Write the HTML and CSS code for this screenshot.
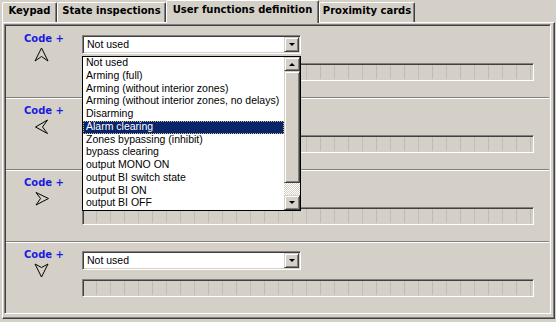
FILE: index.html
```html
<!DOCTYPE html>
<html>
<head>
<meta charset="utf-8">
<title>User functions definition</title>
<link rel="stylesheet" href="styles.css">
</head>
<body>
<div class="tabs">
  <div class="tab t1">Keypad</div>
  <div class="tab t2">State inspections</div>
  <div class="tab t3 active">User functions definition</div>
  <div class="tab t4">Proximity cards</div>
</div>
<div class="sheet">
  <div class="inner">
    <section class="row first">
      <div class="left">
        <span class="code">Code +</span>
        <svg class="arrow" viewBox="0 0 16 15" width="16" height="15"><polygon points="7.5,1 14,14 7.5,9.5 1,14"/></svg>
      </div>
      <div class="controls">
        <div class="combo-wrap">
          <div class="combo"><span class="val">Not used</span><span class="btn"><i class="tri-down"></i></span></div>
          <div class="list">
            <div class="items">
              <div class="item">Not used</div>
              <div class="item">Arming (full)</div>
              <div class="item">Arming (without interior zones)</div>
              <div class="item">Arming (without interior zones, no delays)</div>
              <div class="item">Disarming</div>
              <div class="item sel">Alarm clearing</div>
              <div class="item">Zones bypassing (inhibit)</div>
              <div class="item">bypass clearing</div>
              <div class="item">output MONO ON</div>
              <div class="item">output BI switch state</div>
              <div class="item">output BI ON</div>
              <div class="item">output BI OFF</div>
            </div>
            <div class="scroll">
              <div class="sbtn up"><i class="tri-up"></i></div>
              <div class="thumb"></div>
              <div class="track"></div>
              <div class="sbtn down"><i class="tri-down"></i></div>
            </div>
          </div>
        </div>
        <div class="bar"></div>
      </div>
    </section>
    <section class="row">
      <div class="left">
        <span class="code">Code +</span>
        <svg class="arrow" viewBox="0 0 16 15" width="16" height="15"><polygon points="13.5,1 1.5,8 13.5,14.5 8.5,8"/></svg>
      </div>
      <div class="controls">
        <div class="combo-wrap">
          <div class="combo"><span class="val"></span><span class="btn"><i class="tri-down"></i></span></div>
        </div>
        <div class="bar"></div>
      </div>
    </section>
    <section class="row">
      <div class="left">
        <span class="code">Code +</span>
        <svg class="arrow" viewBox="0 0 16 15" width="16" height="15"><polygon points="2,1.5 14.5,7.5 2,14 6.5,7.5"/></svg>
      </div>
      <div class="controls">
        <div class="combo-wrap">
          <div class="combo"><span class="val"></span><span class="btn"><i class="tri-down"></i></span></div>
        </div>
        <div class="bar"></div>
      </div>
    </section>
    <section class="row last">
      <div class="left">
        <span class="code">Code +</span>
        <svg class="arrow" viewBox="0 0 16 15" width="16" height="15"><polygon points="1,1 7.5,4.5 14,1 7.5,14"/></svg>
      </div>
      <div class="controls">
        <div class="combo-wrap">
          <div class="combo"><span class="val">Not used</span><span class="btn"><i class="tri-down"></i></span></div>
        </div>
        <div class="bar"></div>
      </div>
    </section>
  </div>
</div>
</body>
</html>
```

FILE: styles.css
```css
html, body {
  margin: 0;
  padding: 0;
}
body {
  width: 556px;
  height: 322px;
  overflow: hidden;
  background: #d4d0c8;
  color: #000;
  font-family: "Liberation Sans", Arial, sans-serif;
}

/* ---------- tabs ---------- */
.tabs {
  display: flex;
  align-items: flex-end;
  height: 22px;
  padding-left: 2px;
  position: relative;
  z-index: 2;
}
.tab {
  box-sizing: border-box;
  height: 20px;
  border: 1px solid;
  border-bottom: none;
  border-color: #fff #404040 transparent #fff;
  border-radius: 2px 2px 0 0;
  box-shadow: inset -1px 0 #808080;
  background: #d4d0c8;
  padding-top: 2px;
  text-align: center;
  font: bold 10px/12px "DejaVu Sans", Verdana, sans-serif;
  white-space: nowrap;
}
.t1 { width: 55px; }
.t2 { width: 109px; }
.t3 { width: 153px; }
.t4 { width: 96px; }
.tab.active {
  height: 23px;
  margin-bottom: -1px;
  padding-top: 3px;
}

/* ---------- sheet ---------- */
.sheet {
  position: relative;
  z-index: 1;
  margin: 0 1px 0 2px;
  border: 1px solid;
  border-color: #fff #404040 #404040 #fff;
  box-shadow: inset -1px -1px #808080;
  padding: 1px 3px 4px 1px;
}
.inner {
  border: 1px solid;
  border-color: #808080 #fff #fff #808080;
  box-shadow: inset 1px 1px #404040, inset -1px -1px #d4d0c8;
  padding: 1px;
}

/* ---------- rows ---------- */
.row {
  box-sizing: border-box;
  height: 72px;
  padding-top: 8px;
  display: flex;
  border-bottom: 1px solid #fff;
  box-shadow: inset 0 -1px #808080;
}
.row.first {
  height: 73px;
  padding-top: 9px;
}
.row.last {
  height: 69px;
  border-bottom: none;
  box-shadow: none;
}
.left {
  width: 76px;
  margin-top: -2px;
  display: flex;
  flex-direction: column;
  align-items: center;
}
.code {
  font: bold 10px/12px "DejaVu Sans", Verdana, sans-serif;
  color: #1c1ce0;
  white-space: nowrap;
}
.arrow {
  display: block;
  margin-top: 2px;
  margin-right: 4px;
}
.arrow polygon {
  fill: none;
  stroke: #000;
  stroke-width: 1;
  stroke-linejoin: miter;
}
.controls {
  display: flex;
  flex-direction: column;
  gap: 9px;
}

/* ---------- combo ---------- */
.combo-wrap {
  position: relative;
  width: 219px;
}
.combo {
  box-sizing: border-box;
  height: 19px;
  border: 1px solid;
  border-color: #808080 #fff #fff #808080;
  box-shadow: inset 1px 1px #404040, inset -1px -1px #d4d0c8;
  background: #fff;
  padding: 1px;
  display: flex;
}
.val {
  flex: 1;
  padding-left: 3px;
  font-size: 10.5px;
  line-height: 15px;
}
.btn,
.sbtn,
.thumb {
  box-sizing: border-box;
  background: #d4d0c8;
  border: 1px solid;
  border-color: #d4d0c8 #404040 #404040 #d4d0c8;
  box-shadow: inset 1px 1px #fff, inset -1px -1px #808080;
}
.btn {
  width: 15px;
  height: 15px;
  display: flex;
  align-items: center;
  justify-content: center;
}
.tri-down {
  display: block;
  width: 0;
  height: 0;
  border-left: 3px solid transparent;
  border-right: 3px solid transparent;
  border-top: 3px solid #000;
}
.tri-up {
  display: block;
  width: 0;
  height: 0;
  border-left: 3px solid transparent;
  border-right: 3px solid transparent;
  border-bottom: 3px solid #000;
}

/* ---------- dropdown list ---------- */
.list {
  position: absolute;
  left: 0;
  top: 21px;
  z-index: 5;
  box-sizing: border-box;
  width: 219px;
  height: 155px;
  border: 1px solid #000;
  background: #fff;
  display: flex;
}
.items {
  flex: 1;
}
.item {
  box-sizing: border-box;
  height: 12.75px;
  padding-left: 3px;
  font-size: 10.5px;
  line-height: 11px;
  white-space: nowrap;
  overflow: hidden;
}
.item.sel {
  background: #0a246a;
  color: #fff;
  outline: 1px dotted #c8bc80;
  outline-offset: -1px;
}
.scroll {
  width: 16px;
  display: flex;
  flex-direction: column;
}
.sbtn {
  display: flex;
  align-items: center;
  justify-content: center;
}
.sbtn.up { height: 14px; }
.sbtn.down { flex: 1; }
.thumb { height: 112px; }
.track {
  height: 12px;
  background: repeating-conic-gradient(#fff 0 25%, #d4d0c8 0 50%) 0 0 / 2px 2px;
}

/* ---------- bar ---------- */
.bar {
  box-sizing: border-box;
  width: 452px;
  height: 18px;
  border: 1px solid;
  border-color: #808080 #fff #fff #808080;
  box-shadow: inset 1px 1px #404040, inset -1px -1px #d4d0c8;
  background: repeating-linear-gradient(to right, transparent 0 13px, #c0bcb4 13px 14px) #d4d0c8;
}
```
